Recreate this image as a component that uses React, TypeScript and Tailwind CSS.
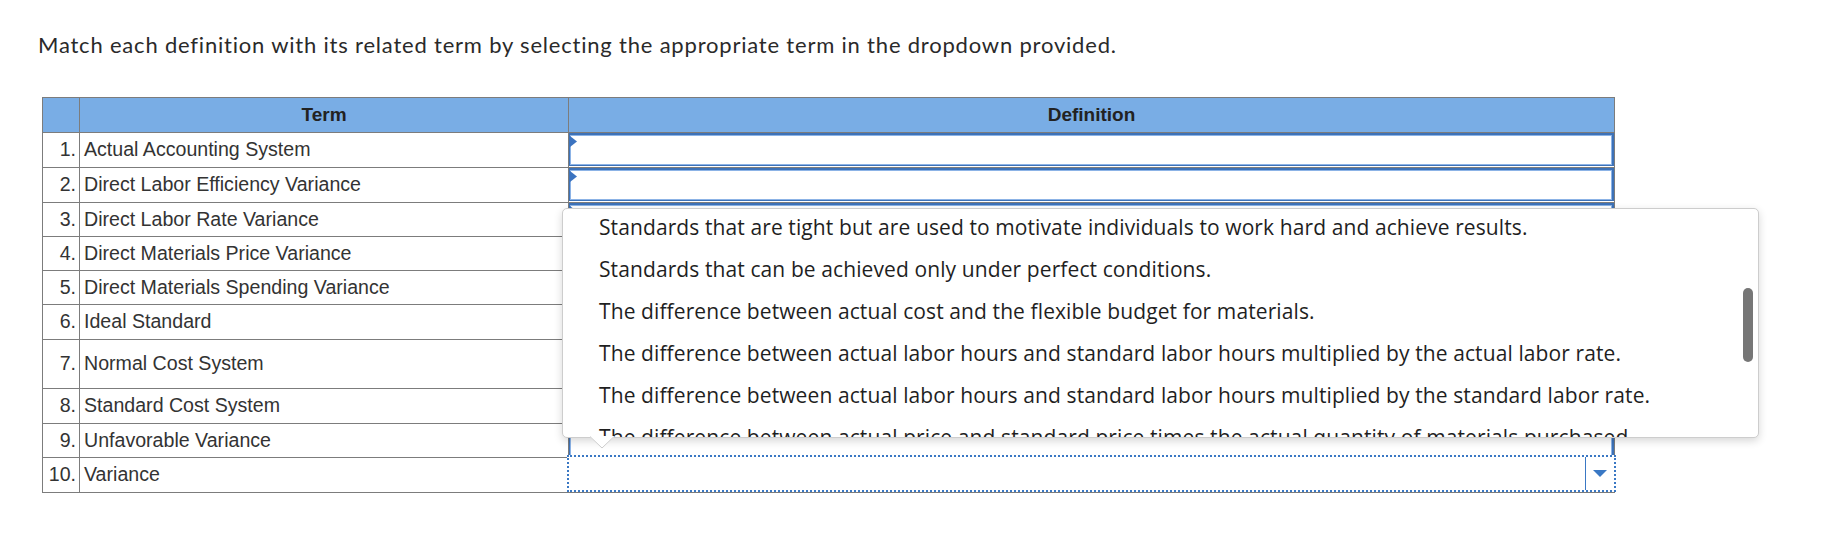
import React from 'react';

interface TermRow {
  num: string;
  label: string;
  height: string;
}

const rows: TermRow[] = [
  { num: '1.', label: 'Actual Accounting System', height: 'h-[35px]' },
  { num: '2.', label: 'Direct Labor Efficiency Variance', height: 'h-[35px]' },
  { num: '3.', label: 'Direct Labor Rate Variance', height: 'h-[34px]' },
  { num: '4.', label: 'Direct Materials Price Variance', height: 'h-[34px]' },
  { num: '5.', label: 'Direct Materials Spending Variance', height: 'h-[34px]' },
  { num: '6.', label: 'Ideal Standard', height: 'h-[35px]' },
  { num: '7.', label: 'Normal Cost System', height: 'h-[49px]' },
  { num: '8.', label: 'Standard Cost System', height: 'h-[35px]' },
  { num: '9.', label: 'Unfavorable Variance', height: 'h-[34px]' },
  { num: '10.', label: 'Variance', height: 'h-[35px]' },
];

const options = [
  'Standards that are tight but are used to motivate individuals to work hard and achieve results.',
  'Standards that can be achieved only under perfect conditions.',
  'The difference between actual cost and the flexible budget for materials.',
  'The difference between actual labor hours and standard labor hours multiplied by the actual labor rate.',
  'The difference between actual labor hours and standard labor hours multiplied by the standard labor rate.',
  'The difference between actual price and standard price times the actual quantity of materials purchased.',
];

function ClosedSelect() {
  return (
    <div className="h-[33px] w-full flex items-start bg-white border-t-2 border-l border-r-2 border-b border-[#3d72b8] shadow-[inset_0_0_0_1px_#8cb3e6]">
      <svg width="8" height="11" viewBox="0 0 8 11" className="mt-[1px] shrink-0">
        <path d="M0 0 L7 5.5 L0 11 Z" fill="#3b73c0" />
      </svg>
    </div>
  );
}

function FocusedSelect() {
  return (
    <div className="-mt-[3px] -mx-[2px] h-[37px] flex bg-white border-2 border-dotted border-[#3a78c4]">
      <div className="flex-1" />
      <div className="w-[29px] border-l border-[#3a78c4] flex items-center justify-center">
        <svg width="14" height="8" viewBox="0 0 14 8">
          <path d="M0 0 H14 L7 7 Z" fill="#3a78c4" />
        </svg>
      </div>
    </div>
  );
}

export default function App() {
  return (
    <div className="relative w-full h-[533px] bg-white overflow-hidden">
      <p className="pt-[31px] pl-[38px] text-[22px] leading-[28px] tracking-[0.8px] text-[#2a2a2a] font-['Lato',sans-serif]">
        Match each definition with its related term by selecting the appropriate term in the dropdown provided.
      </p>

      {/* Match table */}
      <div className="mt-[38px] ml-[42px] w-[1573px] border-t border-l border-r border-[#7c7c7c] font-['Liberation_Sans',Arial,sans-serif] text-[19.6px] text-[#333]">
        <div className="flex h-[35px] bg-[#79ade5] border-b border-[#7c7c7c] font-bold text-[19px] text-[#222]">
          <div className="w-[37px] border-r border-[#7c7c7c]" />
          <div className="w-[489px] border-r border-[#7c7c7c] flex items-center justify-center">Term</div>
          <div className="flex-1 flex items-center justify-center">Definition</div>
        </div>
        {rows.map((row, i) => (
          <div key={row.num} className={`flex ${row.height} border-b border-[#7c7c7c]`}>
            <div className="w-[37px] border-r border-[#7c7c7c] flex items-center justify-end pr-[3px]">{row.num}</div>
            <div className="w-[489px] border-r border-[#7c7c7c] flex items-center pl-[4px]">{row.label}</div>
            <div className="flex-1 min-w-0">
              {i === rows.length - 1 ? <FocusedSelect /> : <ClosedSelect />}
            </div>
          </div>
        ))}
      </div>

      {/* Open dropdown list */}
      <div className="absolute left-[562px] top-[208px] w-[1197px] h-[230px]">
        <div className="h-full flex bg-white border border-[#cdcdcd] rounded-[5px] shadow-[0_3px_8px_rgba(0,0,0,0.16)] font-['Open_Sans',sans-serif] text-[21px] tracking-[0.1px] text-[#1f1f1f]">
          <ul className="flex-1 overflow-hidden">
            <div className="-mt-[2px]">
              {options.map((opt) => (
                <li key={opt} className="h-[42px] flex items-center pl-[36px] whitespace-nowrap">{opt}</li>
              ))}
            </div>
          </ul>
          <div className="w-[10px] mr-[5px] pt-[79px]">
            <div className="h-[74px] w-[10px] rounded-full bg-[#767676]" />
          </div>
        </div>
        <svg width="26" height="13" viewBox="0 0 26 13" className="absolute left-[27px] top-[228px]">
          <path d="M0 0 L13 12 L26 0 Z" fill="#ffffff" />
          <path d="M1 0.5 L13 12 L25 0.5" fill="none" stroke="#cdcdcd" strokeWidth="1" />
        </svg>
      </div>
    </div>
  );
}
